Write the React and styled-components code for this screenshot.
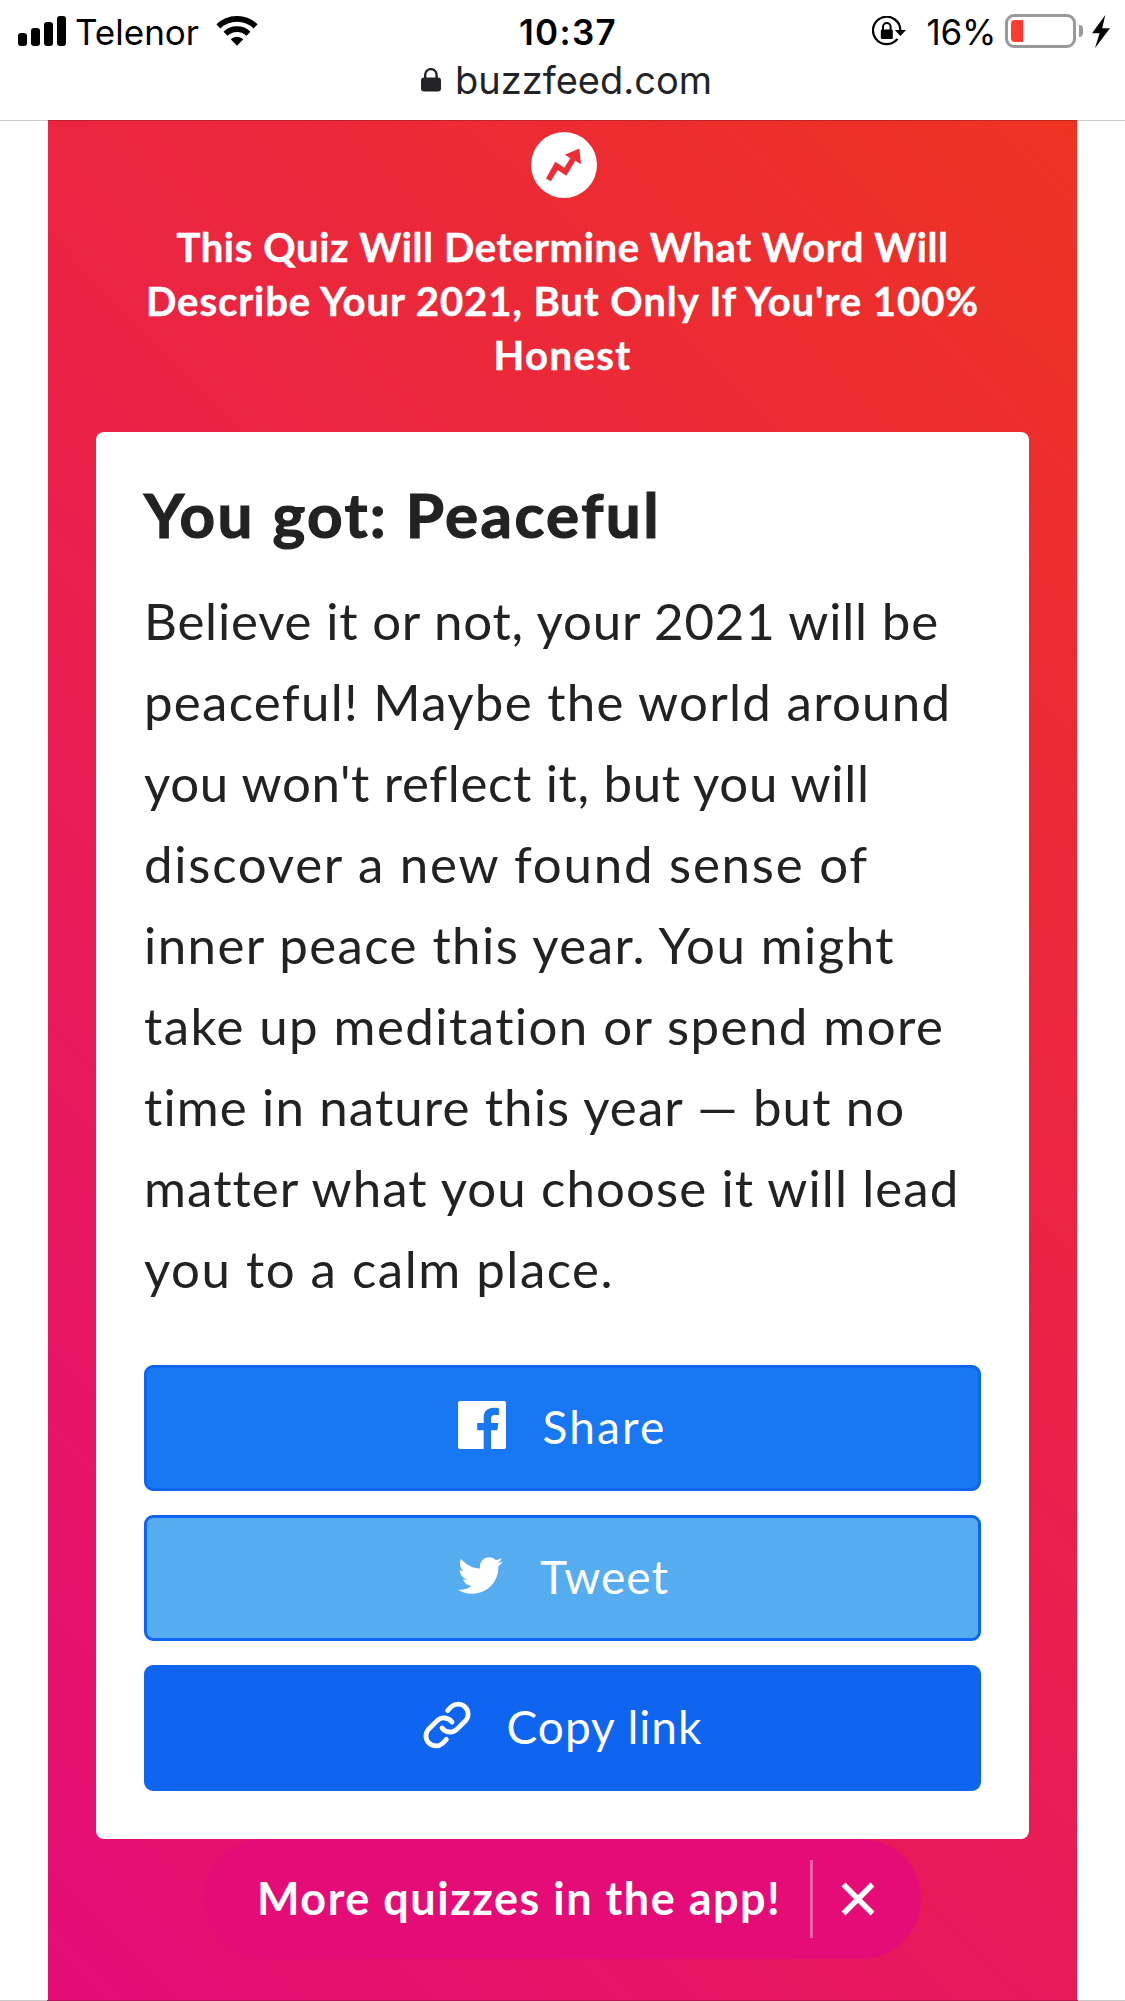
import React from 'react';
import styled, { createGlobalStyle } from 'styled-components';
import { FaTwitter } from 'react-icons/fa';

const GlobalStyle = createGlobalStyle`
    * {
        box-sizing: border-box;
    }
    body {
        margin: 0;
        background: #fff;
        font-family: Lato, "Open Sans", sans-serif;
    }
    h1, h2, p {
        margin: 0;
    }
    svg {
        display: block;
        flex: none;
    }
    button {
        font-family: inherit;
    }
`;

const Screen = styled.div`
    display: flex;
    flex-direction: column;
    width: 1125px;
    height: 2001px;
    overflow: hidden;
    border-bottom: 1px solid #c4165a;
    border-image: linear-gradient(to right, #c8c8c8 48px, #b9105f 48px, #b91649 1077px, #c8c8c8 1077px) 1;
`;

const Header = styled.header`
    position: relative;
    height: 120px;
    flex: none;
    background: #fff;
    box-shadow: 0 1px 0 rgba(0, 0, 0, 0.2);
    font-family: Inter, "Liberation Sans", sans-serif;
    color: #000;
`;

const StatusBar = styled.div`
    display: grid;
    grid-template-columns: 1fr auto 1fr;
    align-items: center;
    height: 60px;
    padding: 0 15px 0 18px;
    font-size: 35px;
    line-height: 60px;
`;

const StatusSide = styled.div`
    display: flex;
    align-items: center;
    justify-content: ${(props) => (props.$end ? 'flex-end' : 'flex-start')};
    height: 60px;
`;

const Carrier = styled.span`
    margin: 0 17px 0 8px;
    padding-top: 2px;
`;

const Clock = styled.span`
    padding: 2px 0 0 8px;
    font-weight: 600;
    letter-spacing: 1.3px;
`;

const Percent = styled.span`
    margin: 0 9px 0 21px;
    padding-top: 2px;
    letter-spacing: -0.3px;
`;

const Battery = styled.div`
    width: 71px;
    height: 34px;
    padding: 3px;
    border: 3px solid #999;
    border-radius: 9px;
`;

const BatteryLevel = styled.div`
    width: 12px;
    height: 22px;
    border-radius: 4px 0 0 4px;
    background: #ff3b30;
`;

const BatteryTip = styled.div`
    width: 4px;
    height: 12px;
    margin: 0 9px 0 3px;
    border-radius: 0 4px 4px 0;
    background: #999;
`;

const AddressBar = styled.div`
    display: flex;
    align-items: center;
    justify-content: center;
    gap: 14px;
    height: 40px;
    padding-left: 8px;
    font-size: 38px;
    line-height: 40px;
    color: #212328;
`;

const Quiz = styled.main`
    display: flex;
    flex-direction: column;
    align-items: center;
    flex: 1;
    margin: 0 48px;
    padding: 12px 48px 0;
    background: linear-gradient(45deg, #e50c78, #ee3322);
`;

const QuizTitle = styled.h1`
    margin: 22px 0 50px;
    font-size: 40px;
    font-weight: 700;
    line-height: 54px;
    text-align: center;
    color: #fff;
    -webkit-text-stroke: 0.5px #fff;
`;

const Line = styled.span`
    display: block;
    white-space: nowrap;
    letter-spacing: ${(props) => props.$spacing || 0}px;
`;

const Card = styled.section`
    width: 933px;
    height: 1407px;
    padding: 46px 48px 48px;
    border-radius: 8px;
    background: #fff;
    color: #222;
`;

const ResultTitle = styled.h2`
    font-size: 62px;
    font-weight: 700;
    line-height: 72px;
    letter-spacing: 2.4px;
    white-space: nowrap;
    -webkit-text-stroke: 1.2px #222;
`;

const Description = styled.p`
    margin: 30px 0 56px;
    font-size: 51px;
    line-height: 81px;
`;

const Actions = styled.div`
    display: flex;
    flex-direction: column;
    gap: 24px;
`;

const ShareButton = styled.button`
    display: flex;
    align-items: center;
    justify-content: center;
    gap: 36px;
    height: 126px;
    padding: 0;
    border: 3px solid #0f65ef;
    border-radius: 9px;
    background: ${(props) => props.$color};
    color: #fff;
    font-size: 46px;
    letter-spacing: ${(props) => props.$spacing}px;
`;

const IconSlot = styled.span`
    display: flex;
    align-items: center;
    justify-content: center;
    width: 48px;
    height: 48px;
    margin-bottom: 6px;
`;

const Label = styled.span`
    margin-bottom: 4px;
`;

const AppBanner = styled.div`
    display: flex;
    align-items: center;
    width: 717px;
    height: 120px;
    padding-left: 53px;
    border-radius: 60px;
    background: #e50c78;
    color: #fff;
`;

const BannerText = styled.span`
    width: 553px;
    margin-bottom: 3px;
    font-size: 45px;
    font-weight: 700;
    white-space: nowrap;
    letter-spacing: 1.5px;
`;

const CloseButton = styled.button`
    display: flex;
    align-items: center;
    height: 78px;
    padding: 0 0 0 28px;
    border: 0;
    border-left: 3px solid rgba(255, 255, 255, 0.35);
    background: none;
    color: #fff;
`;

const SignalIcon = () => (
    <svg width="49" height="30" viewBox="0 0 49 30">
        <rect x="0" y="17" width="9" height="13" rx="3" />
        <rect x="13" y="12" width="9" height="18" rx="3" />
        <rect x="26" y="6" width="9" height="24" rx="3" />
        <rect x="39" y="0" width="9" height="30" rx="3" />
    </svg>
);

const WifiIcon = () => (
    <svg width="42" height="30" viewBox="0 0 42 30" fill="none" stroke="#000">
        <path d="M2.4 10.4A26.8 26.8 0 0 1 39.6 10.4" strokeWidth="5.8" />
        <path d="M9.5 17.8A16.5 16.5 0 0 1 32.5 17.8" strokeWidth="5.6" />
        <path d="M21 29.7L14.7 23.2A9 9 0 0 1 27.3 23.2Z" fill="#000" stroke="none" />
    </svg>
);

const RotationLockIcon = () => (
    <svg width="34" height="30" viewBox="0 0 34 30">
        <path d="M25.5 22.9A13.7 13.7 0 1 1 28.4 14" fill="none" stroke="#000" strokeWidth="2.3" />
        <path d="M22.8 14H34L28.4 20Z" />
        <rect x="8.8" y="13.5" width="12" height="9.6" rx="1.4" />
        <path d="M11 14V10.8A3.8 3.8 0 0 1 18.6 10.8V14" fill="none" stroke="#000" strokeWidth="2" />
    </svg>
);

const BoltIcon = () => (
    <svg width="18" height="33" viewBox="0 0 18 33">
        <path d="M13.3 0L0 18.3H7.6L3 33L18 13.3H10.2Z" />
    </svg>
);

const PadlockIcon = () => (
    <svg width="20" height="24" viewBox="0 0 20 24" fill="#212328">
        <rect x="0" y="9.5" width="20" height="14" rx="3" />
        <path d="M4.2 11V6.8A5.6 5.6 0 0 1 15.6 6.8V11" fill="none" stroke="#212328" strokeWidth="2.4" />
    </svg>
);

const TrendingLogo = () => (
    <svg width="68" height="66" viewBox="-2 0 68 66">
        <circle cx="33" cy="33" r="33" fill="#fff" />
        <path
            d="M15 46.5L19.8 49.3L26.7 38L35.3 43.7L44.2 28.8L50 32.2L48.3 16.5L33.8 22.7L39.4 26.2L33.3 35.8L24.3 29.7Z"
            fill="#ed2c35"
        />
    </svg>
);

const FacebookIcon = () => (
    <svg width="48" height="48" viewBox="0 0 48 48" fill="#fff">
        <path d="M2 0H46A2 2 0 0 1 48 2V46A2 2 0 0 1 46 48H33V29.3H39.3L40.4 21.9H33V17.8C33 15.2 33.9 13.9 37 13.9H40.9V7.2C39.6 7 37.6 6.8 35.6 6.8C29.6 6.8 25.7 10.2 25.7 16.4V21.9H19.2V29.3H25.7V48H2A2 2 0 0 1 0 46V2A2 2 0 0 1 2 0Z" />
    </svg>
);

const LinkIcon = () => (
    <svg width="48" height="48" viewBox="0 0 48 48" fill="none" stroke="#fff" strokeWidth="4.8" strokeLinecap="round">
        <path d="M24.6 9.6L28.5 5.5A10 10 0 0 1 42.7 19.5L34.3 27.9A10 10 0 0 1 19 27" />
        <path d="M23.4 38.4L19.5 42.5A10 10 0 0 1 5.3 28.5L13.7 20.1A10 10 0 0 1 29 21" />
    </svg>
);

const CloseIcon = () => (
    <svg width="34" height="34" viewBox="0 0 34 34" stroke="#fff" strokeWidth="5.4">
        <path d="M2.5 2.5L31.5 31.5M31.5 2.5L2.5 31.5" />
    </svg>
);

const titleLines = [
    { text: 'This Quiz Will Determine What Word Will', spacing: 0.65 },
    { text: "Describe Your 2021, But Only If You're 100%", spacing: 0.96 },
    { text: 'Honest', spacing: 1.4 },
];

const resultLines = [
    { text: 'Believe it or not, your 2021 will be', spacing: 0.8 },
    { text: 'peaceful! Maybe the world around', spacing: 1.28 },
    { text: "you won't reflect it, but you will", spacing: 0.65 },
    { text: 'discover a new found sense of', spacing: 1.76 },
    { text: 'inner peace this year. You might', spacing: 1.42 },
    { text: 'take up meditation or spend more', spacing: 1.43 },
    { text: 'time in nature this year — but no', spacing: 1.12 },
    { text: 'matter what you choose it will lead', spacing: 1.1 },
    { text: 'you to a calm place.', spacing: 1.5 },
];

const actions = [
    { label: 'Share', color: '#1877f2', spacing: 2.2, icon: <FacebookIcon /> },
    { label: 'Tweet', color: '#55acee', spacing: 1, icon: <FaTwitter size={45} /> },
    { label: 'Copy link', color: '#0f65ef', spacing: 1, icon: <LinkIcon /> },
];

function App() {
    return (
        <Screen>
            <GlobalStyle />
            <Header>
                <StatusBar>
                    <StatusSide>
                        <SignalIcon />
                        <Carrier>Telenor</Carrier>
                        <WifiIcon />
                    </StatusSide>
                    <Clock>10:37</Clock>
                    <StatusSide $end>
                        <RotationLockIcon />
                        <Percent>16%</Percent>
                        <Battery>
                            <BatteryLevel />
                        </Battery>
                        <BatteryTip />
                        <BoltIcon />
                    </StatusSide>
                </StatusBar>
                <AddressBar>
                    <PadlockIcon />
                    buzzfeed.com
                </AddressBar>
            </Header>
            <Quiz>
                <TrendingLogo />
                <QuizTitle>
                    {titleLines.map((line) => (
                        <Line key={line.text} $spacing={line.spacing}>{line.text}</Line>
                    ))}
                </QuizTitle>
                <Card>
                    <ResultTitle>You got: Peaceful</ResultTitle>
                    <Description>
                        {resultLines.map((line) => (
                            <Line key={line.text} $spacing={line.spacing}>{line.text}</Line>
                        ))}
                    </Description>
                    <Actions>
                        {actions.map((action) => (
                            <ShareButton key={action.label} type="button" $color={action.color} $spacing={action.spacing}>
                                <IconSlot>{action.icon}</IconSlot>
                                <Label>{action.label}</Label>
                            </ShareButton>
                        ))}
                    </Actions>
                </Card>
                <AppBanner>
                    <BannerText>More quizzes in the app!</BannerText>
                    <CloseButton type="button" aria-label="Close">
                        <CloseIcon />
                    </CloseButton>
                </AppBanner>
            </Quiz>
        </Screen>
    );
}

export default App;
